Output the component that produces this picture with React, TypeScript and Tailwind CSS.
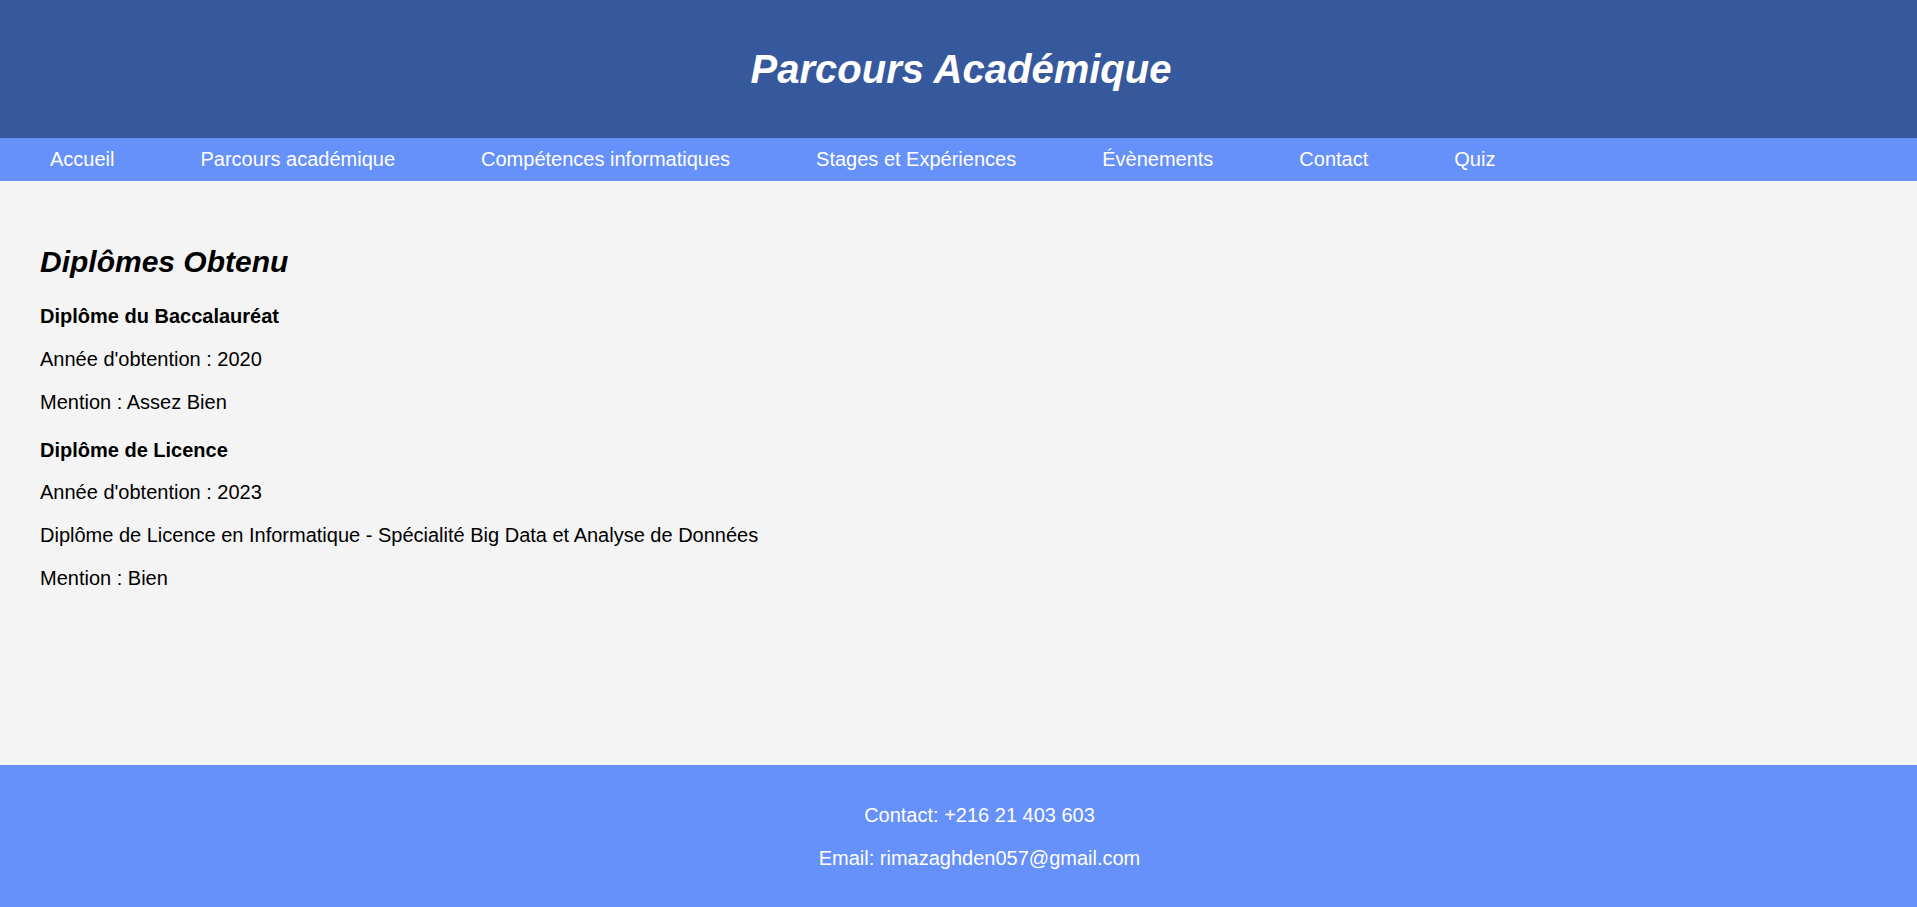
import React from "react";

const navItems = [
  "Accueil",
  "Parcours académique",
  "Compétences informatiques",
  "Stages et Expériences",
  "Évènements",
  "Contact",
  "Quiz",
];

const App = () => {
  return (
    <div className="min-h-screen bg-[#f4f4f4] font-['Liberation_Sans',Arial,sans-serif] text-black">
      <header className="h-[138px] bg-[#36589c] flex items-center justify-center pl-[5px]">
        <h1 className="text-[40px] leading-[46px] font-bold italic text-white">Parcours Académique</h1>
      </header>

      <nav className="h-[43px] bg-[#6690fa] flex items-center pl-[50px] gap-[86px]">
        {navItems.map((item) => (
          <a key={item} href="#" className="text-[20px] leading-[23px] text-white">
            {item}
          </a>
        ))}
      </nav>

      <main className="h-[584px] px-[40px] pt-[64px]">
        <h2 className="text-[30px] leading-[34px] font-bold italic">Diplômes Obtenu</h2>

        <h3 className="mt-[26px] text-[20px] leading-[23px] font-bold">Diplôme du Baccalauréat</h3>
        <p className="mt-[20px] text-[20px] leading-[23px]">Année d'obtention : 2020</p>
        <p className="mt-[20px] text-[20px] leading-[23px]">Mention : Assez Bien</p>

        <h3 className="mt-[25px] text-[20px] leading-[23px] font-bold">Diplôme de Licence</h3>
        <p className="mt-[19px] text-[20px] leading-[23px]">Année d'obtention : 2023</p>
        <p className="mt-[20px] text-[20px] leading-[23px]">
          Diplôme de Licence en Informatique - Spécialité Big Data et Analyse de Données
        </p>
        <p className="mt-[20px] text-[20px] leading-[23px]">Mention : Bien</p>
      </main>

      <footer className="h-[142px] bg-[#6690fa] flex flex-col items-center pt-[39px] pl-[42px] gap-[20px] text-white text-[20px] leading-[23px]">
        <p>Contact: +216 21 403 603</p>
        <p>Email: rimazaghden057@gmail.com</p>
      </footer>
    </div>
  );
};

export default App;
